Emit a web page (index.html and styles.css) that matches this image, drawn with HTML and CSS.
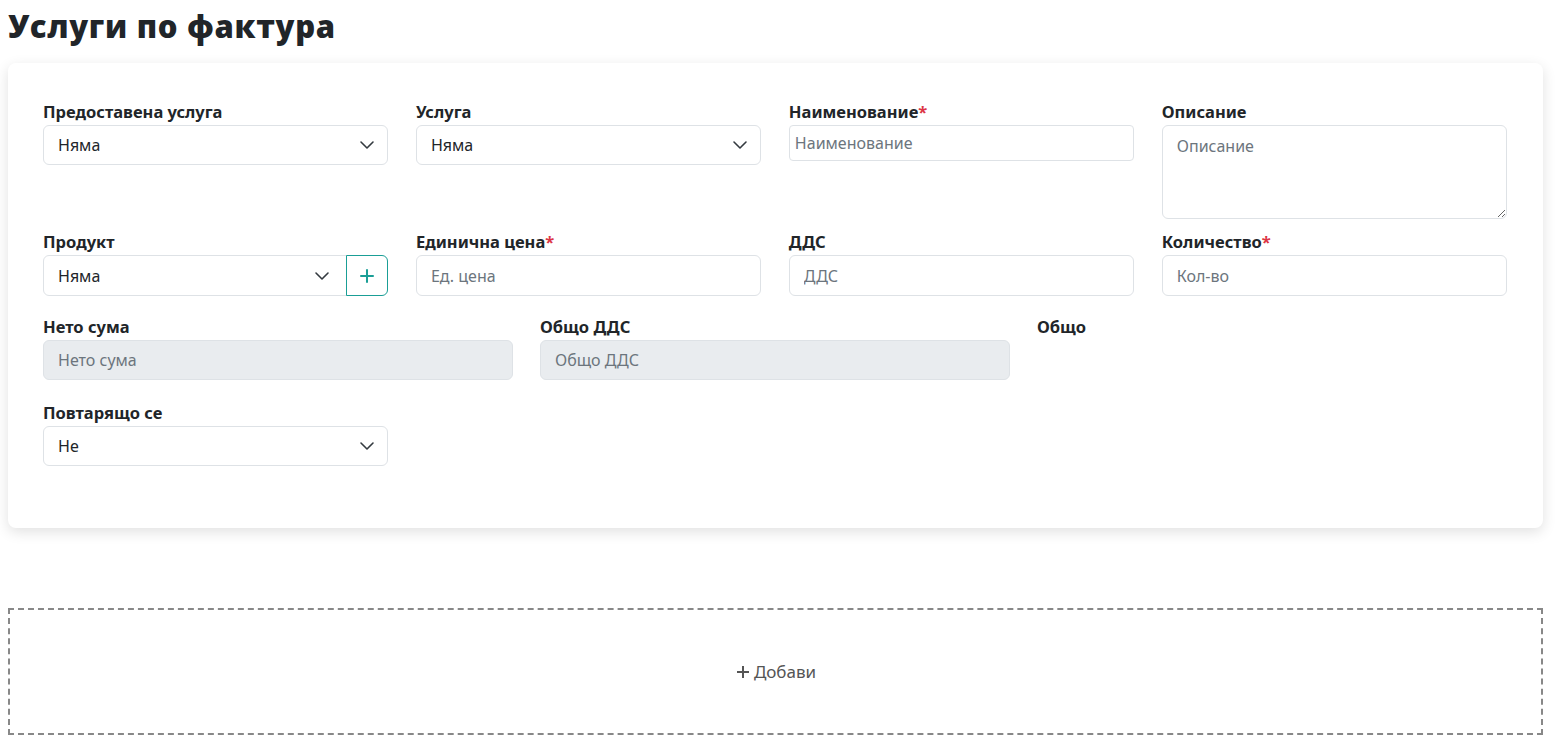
FILE: index.html
```html
<!DOCTYPE html>
<html lang="bg">
<head>
    <meta charset="UTF-8">
    <title>Услуги по фактура</title>
    <link rel="stylesheet" href="styles.css">
</head>
<body>

<h1 class="page-title">Услуги по фактура</h1>

<div class="service-card">
    <div class="form-row cols-4 row-tall">
        <div class="field">
            <label>Предоставена услуга</label>
            <div class="select">
                <span>Няма</span>
                <svg class="chevron" viewBox="0 0 16 16"><path d="M2 5l6 6 6-6"/></svg>
            </div>
        </div>
        <div class="field">
            <label>Услуга</label>
            <div class="select">
                <span>Няма</span>
                <svg class="chevron" viewBox="0 0 16 16"><path d="M2 5l6 6 6-6"/></svg>
            </div>
        </div>
        <div class="field">
            <label>Наименование<span class="req">*</span></label>
            <input type="text" class="input input-plain" placeholder="Наименование">
        </div>
        <div class="field">
            <label>Описание</label>
            <textarea class="input textarea" placeholder="Описание"></textarea>
        </div>
    </div>

    <div class="form-row cols-4 row-mid">
        <div class="field">
            <label>Продукт</label>
            <div class="input-group">
                <div class="select select-grouped">
                    <span>Няма</span>
                    <svg class="chevron" viewBox="0 0 16 16"><path d="M2 5l6 6 6-6"/></svg>
                </div>
                <button type="button" class="add-btn" title="Добави продукт">
                    <svg viewBox="0 0 16 16"><path d="M8 2v12M2 8h12"/></svg>
                </button>
            </div>
        </div>
        <div class="field">
            <label>Единична цена<span class="req">*</span></label>
            <input type="text" class="input" placeholder="Ед. цена">
        </div>
        <div class="field">
            <label>ДДС</label>
            <input type="text" class="input" placeholder="ДДС">
        </div>
        <div class="field">
            <label>Количество<span class="req">*</span></label>
            <input type="text" class="input" placeholder="Кол-во">
        </div>
    </div>

    <div class="form-row cols-3">
        <div class="field">
            <label>Нето сума</label>
            <input type="text" class="input" placeholder="Нето сума" disabled>
        </div>
        <div class="field">
            <label>Общо ДДС</label>
            <input type="text" class="input" placeholder="Общо ДДС" disabled>
        </div>
        <div class="field">
            <label>Общо</label>
        </div>
    </div>

    <div class="form-row cols-4">
        <div class="field">
            <label>Повтарящо се</label>
            <div class="select">
                <span>Не</span>
                <svg class="chevron" viewBox="0 0 16 16"><path d="M2 5l6 6 6-6"/></svg>
            </div>
        </div>
    </div>
</div>

<button type="button" class="add-service">
    <svg viewBox="0 0 16 16"><path d="M8 2v12M2 8h12"/></svg>
    Добави
</button>

</body>
</html>
```

FILE: styles.css
```css
* { box-sizing: border-box; }
body {
    margin: 0;
    padding: 0 12px 0 8px;
    background: #fff;
    color: #212529;
    font-family: "Noto Sans", "Open Sans", sans-serif;
}
.page-title {
    font-family: "Open Sans", "Noto Sans", sans-serif;
    font-size: 31px;
    font-weight: 800;
    line-height: 40px;
    letter-spacing: 0.7px;
    margin: 0;
    padding-top: 6px;
    margin-bottom: 17px;
    color: #212529;
}

.service-card {
    background: #fff;
    border-radius: 8px;
    box-shadow: 0 4px 14px rgba(0,0,0,0.12);
    padding: 40px 36px 62px 35px;
}

.form-row {
    display: grid;
    column-gap: 27.7px;
    margin-bottom: 24px;
}
.form-row:last-child { margin-bottom: 0; }
.form-row.row-tall { margin-bottom: 14px; }
.form-row.row-mid { margin-bottom: 22px; }
.cols-4 { grid-template-columns: repeat(4, 1fr); }
.cols-3 { grid-template-columns: repeat(3, 1fr); column-gap: 27px; }

.field label {
    display: block;
    font-size: 16.5px;
    font-weight: 700;
    line-height: 18px;
    margin-bottom: 4px;
    color: #212529;
}
.req { color: #dc3545; }

.input,
.select {
    display: block;
    width: 100%;
    height: 40px;
    padding: 0 14px;
    font-family: inherit;
    font-size: 16px;
    color: #212529;
    background: #fff;
    border: 1px solid #dee2e6;
    border-radius: 6px;
    outline: none;
}
.input::placeholder { color: #6c757d; opacity: 1; }
.input:disabled { background: #e9ecef; }
.row-mid .input { height: 41px; }
.input-plain {
    height: 36px;
    padding: 0 5px;
    border-radius: 4px;
}
.textarea {
    height: 94px;
    padding: 8px 14px;
    line-height: 24px;
    resize: vertical;
}

.select {
    display: flex;
    align-items: center;
    justify-content: space-between;
    padding-right: 12px;
}
.chevron {
    width: 16px;
    height: 16px;
    fill: none;
    stroke: #343a40;
    stroke-width: 1.6;
    stroke-linecap: round;
    stroke-linejoin: round;
}

.input-group { display: flex; height: 41px; }
.select-grouped {
    flex: 1;
    height: 41px;
    border-radius: 6px 0 0 6px;
    padding-right: 16px;
}
.add-btn {
    width: 42px;
    height: 41px;
    margin-left: -1px;
    background: #fff;
    border: 1px solid #1a9e96;
    border-radius: 0 6px 6px 0;
    display: flex;
    align-items: center;
    justify-content: center;
    cursor: pointer;
    padding: 0;
}
.add-btn svg {
    width: 18px;
    height: 18px;
    fill: none;
    stroke: #1a9e96;
    stroke-width: 1.8;
}

.add-service {
    display: flex;
    align-items: center;
    justify-content: center;
    gap: 3px;
    width: 100%;
    height: 127px;
    margin-top: 80px;
    background: #fff;
    border: 2px dashed #888;
    color: #555;
    font-family: inherit;
    font-size: 17px;
    cursor: pointer;
}
.add-service svg {
    width: 16px;
    height: 16px;
    fill: none;
    stroke: #555;
    stroke-width: 2;
}
```
